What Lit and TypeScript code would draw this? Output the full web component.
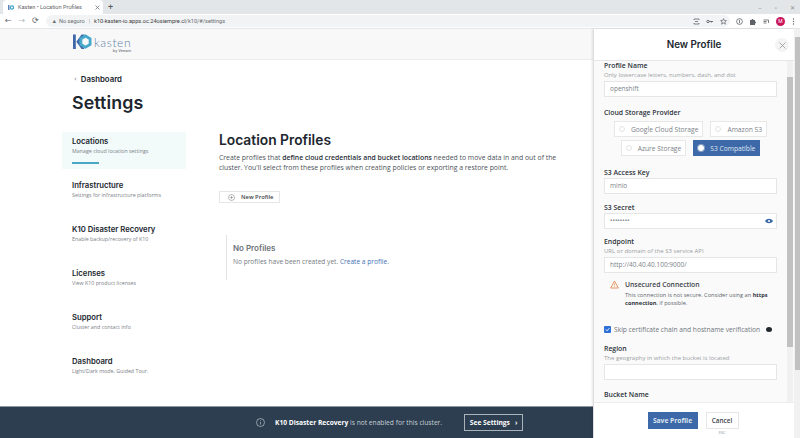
import { LitElement, html, css } from 'lit';
import { customElement } from 'lit/decorators.js';

const navItems = [
  { title: 'Locations', sub: 'Manage cloud location settings', active: true },
  { title: 'Infrastructure', sub: 'Settings for infrastructure platforms' },
  { title: 'K10 Disaster Recovery', sub: 'Enable backup/recovery of K10' },
  { title: 'Licenses', sub: 'View K10 product licenses' },
  { title: 'Support', sub: 'Cluster and contact info' },
  { title: 'Dashboard', sub: 'Light/Dark mode, Guided Tour.' },
];

const logoMark = html`<svg width="19" height="16" viewBox="0 0 19 16">
  <rect x="0" y="0.5" width="2.8" height="14.5" fill="#3f68a8"></rect>
  <path d="M3.300 7.700L8.600 .5h3L6.500 7.700l5.100 7.300h-3z" fill="#3f68a8"></path>
  <path d="M12.500 2l4.600 2.800v5.600l-4.600 2.800-4.600-2.800V4.800z" fill="none" stroke="#46a9cc" stroke-width="2.800"></path>
</svg>`;

@customElement('app-root')
export class AppRoot extends LitElement {
  static styles = css`
    :host {
      display: flex;
      flex-direction: column;
      width: 800px;
      height: 438px;
      overflow: hidden;
      font-family: 'Open Sans', sans-serif;
      color: #20262e;
      background: #fff;
    }
    .tabstrip {
      height: 14px;
      background: #e3e6e9;
      display: flex;
      align-items: flex-end;
      flex: none;
    }
    .tab {
      width: 100px;
      height: 14px;
      margin-left: 3px;
      background: #fff;
      border-radius: 4px 4px 0 0;
      display: flex;
      align-items: center;
      font: 5.600px 'Roboto', sans-serif;
      color: #5f6368;
      box-sizing: border-box;
      padding: 0 3px 0 5px;
      gap: 4px;
    }
    .tab .name { flex: 1; }
    .tabstrip .plus { margin-left: 5px; font: 9px 'Roboto', sans-serif; color: #555; align-self: center; }
    .winctl { margin-left: auto; display: flex; gap: 13px; padding-right: 5px; font: 6px 'Roboto', sans-serif; color: #8a8d91; align-self: center; }
    .toolbar {
      height: 15px;
      flex: none;
      background: #fff;
      display: flex;
      align-items: center;
      border-bottom: 1px solid #e5e6e8;
      box-sizing: border-box;
      padding-left: 5px;
    }
    .navbtn { width: 13.500px; font: 8px 'DejaVu Sans', sans-serif; color: #5f6368; line-height: 1; }
    .navbtn.off { color: #b5b8bb; }
    .omni {
      height: 12px;
      background: #f1f3f4;
      flex: none;
      width: 684px;
      border-radius: 6px;
      display: flex;
      align-items: center;
      padding: 0 0 0 6px;
      box-sizing: border-box;
      font: 5.600px 'Roboto', sans-serif;
      color: #6a6e72;
      gap: 2px;
    }
    .omni .sep { color: #aaa; margin: 0 2px; }
    .omni b { font-weight: 400; color: #3c4043; }
    .omni .tools { margin-left: auto; display: flex; gap: 6.500px; padding-right: 3px; align-items: center; }
    .extra { display: flex; align-items: center; gap: 6.500px; padding-left: 6px; }
    .avatar { width: 9px; height: 9px; border-radius: 50%; background: #c9145a; color: #fff; font: 5px/9px 'Roboto', sans-serif; text-align: center; }
    .page { position: relative; flex: 1; min-height: 0; display: flex; flex-direction: column; }
    .brand {
      height: 31px;
      flex: none;
      background: #f8f8f8;
      border-bottom: 1px solid #ececec;
      box-sizing: border-box;
      padding: 5px 0 0 73px;
      display: flex;
      align-items: flex-start;
      gap: 1px;
    }
    .wordmark { display: flex; flex-direction: column; color: #5c7fa8; font: 300 12px/13px 'Lato', sans-serif; letter-spacing: 0.6px; margin-top: 2px; margin-left: 1px; }
    .wordmark small { font: 4.200px/4px 'Roboto', sans-serif; letter-spacing: 0; color: #5b6670; text-align: right; }
    .content { flex: 1; min-height: 0; padding: 14px 0 0 62px; background: #fff; }
    .crumb { display: flex; align-items: center; gap: 4px; padding-left: 12px; font: 600 7.800px/10px 'Inter', sans-serif; }
    .crumb i { font: normal 7px/9px 'DejaVu Sans', sans-serif; color: #777; }
    h1 { margin: 8px 0 18px 10px; font: 600 17.800px/22px 'Inter', sans-serif; letter-spacing: 0.1px; }
    .columns { display: flex; }
    .nav { width: 124px; flex: none; display: flex; flex-direction: column; }
    .nav-item { height: 37px; padding: 4px 0 0 10px; box-sizing: border-box; margin-bottom: 7px; }
    .nav-item.active { background: #f2fafa; }
    .nav-item strong { display: block; font: 600 7.700px/11px 'Inter', sans-serif; }
    .nav-item span { display: block; font: 400 5.300px/9px 'Open Sans', sans-serif; color: #7b8187; }
    .nav-item u { display: block; width: 27px; height: 2px; margin-top: 6px; background: #4ba6c4; }
    .main { margin-left: 33px; width: 340px; }
    h2 { margin: 0 0 4px; font: 600 13.800px/17px 'Inter', sans-serif; }
    .main p { margin: 0; font: 400 6.850px/9.500px 'Open Sans', sans-serif; color: #4d535a; }
    .main p b { font-weight: 600; color: #2a3038; }
    .new {
      margin-top: 19px;
      width: 61px;
      height: 12px;
      border: 1px solid #e6e6e6;
      box-sizing: border-box;
      display: flex;
      align-items: center;
      gap: 6px;
      padding-left: 8px;
      font: 600 5.800px 'Open Sans', sans-serif;
      color: #3c424a;
    }
    .empty { margin: 32px 0 0 7px; border-left: 1px solid #e3e3e3; height: 45px; padding: 8px 0 0 6px; box-sizing: border-box; }
    .empty strong { display: block; font: 600 8px/11px 'Inter', sans-serif; color: #6d737a; }
    .empty span { display: block; margin-top: 3px; font: 400 6.600px/9px 'Open Sans', sans-serif; color: #767c82; }
    .empty a { color: #3f6fb5; }
    .banner {
      height: 32px;
      flex: none;
      background: #2c3e50;
      border-top: 1px solid #8b96a1;
      box-sizing: border-box;
      display: flex;
      align-items: center;
      padding-left: 256px;
      font: 400 6.660px 'Open Sans', sans-serif;
      color: #c8ced4;
    }
    .banner svg { margin-right: 10px; }
    .banner b { font-weight: 700; color: #fff; }
    .banner .cta {
      margin-left: 22px;
      width: 59px;
      height: 17px;
      border: 1px solid #aab2ba;
      box-sizing: border-box;
      display: flex;
      align-items: center;
      justify-content: center;
      gap: 5px;
      font-weight: 700;
      color: #fff;
    }
    .drawer {
      position: absolute;
      top: 0;
      bottom: 0;
      right: 6px;
      width: 201px;
      background: #fafafa;
      border-left: 1px solid #e0e0e0;
      display: flex;
      flex-direction: column;
      box-shadow: -1px 0 2px rgba(0, 0, 0, 0.1);
      box-sizing: border-box;
    }
    .pagebar { position: absolute; top: 0; bottom: 0; right: 0; width: 6px; background: #f1f1f1; }
    .pagebar div { margin: 8px 0 0 1px; height: 333px; background: #c1c1c1; }
    .d-head { height: 32px; flex: none; background: #fff; border-bottom: 1px solid #e6e6e6; display: flex; align-items: center; justify-content: center; position: relative; font: 600 9.800px 'Inter', sans-serif; box-sizing: border-box; }
    .close { position: absolute; right: 5px; top: 9px; width: 14px; height: 14px; border-radius: 50%; background: #f4f4f4; display: flex; align-items: center; justify-content: center; }
    .d-body { flex: 1; min-height: 0; overflow: hidden; padding: 0 16px 0 10px; position: relative; }
    .d-scroll { position: absolute; top: 0; bottom: 0; right: 1px; width: 6px; background: #f1f1f1; }
    .d-scroll div { margin-top: 16px; height: 270px; background: #c1c1c1; }
    label { display: block; font: 600 6.900px/9px 'Open Sans', sans-serif; color: #2d333a; }
    .hint { margin-top: 1px; font: 400 6px/8px 'Open Sans', sans-serif; color: #9a9fa4; }
    .input { height: 16px; width: 173px; border: 1px solid #e6e6e6; background: #fff; box-sizing: border-box; padding-left: 5px; font: 400 6.500px/14px 'Open Sans', sans-serif; color: #7c8288; position: relative; }
    .hint + .input { margin-top: 2px; }
    label + .input { margin-top: 1.500px; }
    .sp-cloud { margin-top: 10.500px; }
    .sp-access { margin-top: 11.500px; }
    .sp-secret { margin-top: 8.500px; }
    .sp-end { margin-top: 7.500px; }
    .sp-region { margin-top: 9.500px; }
    .sp-bucket { margin-top: 9.500px; }
    .providers { display: flex; flex-direction: column; align-items: center; gap: 3px; margin-top: 4.500px; width: 173px; box-sizing: border-box; }
    .row { display: flex; gap: 7px; }
    .opt { height: 16px; border: 1px solid #e8e8e8; background: #fff; box-sizing: border-box; display: flex; align-items: center; gap: 6px; padding: 0 4px; font: 400 6.700px 'Open Sans', sans-serif; color: #7c8288; }
    .opt i { width: 6px; height: 6px; border-radius: 50%; border: 1px solid #e4e4e4; box-sizing: border-box; }
    .opt.on { background: #3e69a9; border-color: #3e69a9; color: #dfe7f2; }
    .opt.on i { background: #fff; border: 1px solid #fff; box-shadow: 0 0 0 1px #8aa3c9; }
    .eye { position: absolute; right: 3px; top: 4px; }
    .warn { display: flex; gap: 6px; padding: 7px 0 0 6px; height: 52px; box-sizing: border-box; }
    .warn strong { display: block; font: 600 6.800px/10px 'Open Sans', sans-serif; color: #3d434a; }
    .warn span { display: block; font: 400 5.650px/8px 'Open Sans', sans-serif; color: #60666c; margin-top: 1px; width: 150px; }
    .warn b { color: #2f353c; }
    .check { display: flex; align-items: center; gap: 3px; font: 400 6.650px/10px 'Open Sans', sans-serif; color: #71777d; margin: 0; white-space: nowrap; }
    .check i { width: 7px; height: 7px; background: #2f6fd6; border-radius: 1px; display: flex; align-items: center; justify-content: center; flex: none; }
    .check em { width: 6px; height: 5px; border-radius: 50%; background: #23282e; margin-left: 3px; flex: none; }
    .d-foot { height: 36px; flex: none; background: #fff; border-top: 1px solid #ececec; display: flex; justify-content: center; gap: 8px; padding: 9px 2px 0 0; box-sizing: border-box; }
    .save { width: 50px; height: 17px; background: #3e69a9; color: #dce5f1; font: 700 6.700px/17px 'Open Sans', sans-serif; text-align: center; }
    .cancel-wrap { display: flex; flex-direction: column; align-items: center; }
    .cancel { width: 33px; height: 17px; border: 1px solid #e6e6e6; box-sizing: border-box; font: 600 6.400px/15px 'Open Sans', sans-serif; text-align: center; color: #3c424a; }
    .cancel-wrap small { font: 400 3.800px/6px 'Open Sans', sans-serif; color: #8a8f94; margin-top: 1px; }
  `;

  render() {
    return html`
      <div class="tabstrip">
        <div class="tab">
          <svg width="6" height="5" viewBox="0 0 18 16">
            <rect x="0" y="0" width="4" height="16" fill="#3f68a8"></rect>
            <circle cx="12" cy="8" r="5" fill="none" stroke="#46a9cc" stroke-width="4"></circle>
          </svg>
          <span class="name">Kasten • Location Profiles</span>
          <svg width="5" height="5" viewBox="0 0 5 5" stroke="#5f6368" stroke-width="0.7"><path d="M.5.500l4 4M4.500.500l-4 4"></path></svg>
        </div>
        <div class="plus">+</div>
        <div class="winctl"><span>–</span><span>▫</span><span>✕</span></div>
      </div>
      <div class="toolbar">
        <div class="navbtn">←</div>
        <div class="navbtn off">→</div>
        <div class="navbtn">⟳</div>
        <div class="omni">
          <span>▲</span><span>No seguro</span><span class="sep">|</span>
          <span><b>k10-kasten-io.apps.oc.24osiempre.cl</b>/k10/#/settings</span>
          <div class="tools">
            <svg width="7" height="7" viewBox="0 0 7 7" fill="none" stroke="#5f6368" stroke-width="0.8"><path d="M1 2V1h5v1M1 5v1h5V5M2 3.500h3"></path></svg>
            <svg width="7" height="7" viewBox="0 0 7 7" fill="none" stroke="#5f6368" stroke-width="0.9"><circle cx="2" cy="3.500" r="1.200"></circle><path d="M3.200 3.500H7M5.500 3.500v1"></path></svg>
            <svg width="7" height="7" viewBox="0 0 7 7" fill="none" stroke="#5f6368" stroke-width="0.7"><path d="M3.500.6l.9 2h2l-1.600 1.400.6 2.200-1.900-1.200-1.900 1.200.6-2.200L.6 2.600h2z"></path></svg>
          </div>
        </div>
        <div class="extra">
          <svg width="7" height="7" viewBox="0 0 7 7" fill="none" stroke="#5f6368" stroke-width="0.8"><circle cx="3.500" cy="3.500" r="2.900"></circle><path d="M3.500 1.800v3.400"></path></svg>
          <svg width="7" height="7" viewBox="0 0 7 7" fill="#5f6368"><path d="M1 2h1.500a1 1 0 0 1 2 0H6v1.500a1 1 0 0 1 0 2V7H1z"></path></svg>
          <svg width="7" height="7" viewBox="0 0 7 7" fill="none" stroke="#5f6368" stroke-width="0.8"><path d="M.5 2h5M.5 3.500h3M.5 5h3M5.500 2v3"></path></svg>
          <div class="avatar">M</div>
          <svg width="3" height="7" viewBox="0 0 3 7" fill="#5f6368"><circle cx="1.500" cy="1" r=".7"></circle><circle cx="1.500" cy="3.500" r=".7"></circle><circle cx="1.500" cy="6" r=".7"></circle></svg>
        </div>
      </div>
      <div class="page">
        <div class="brand">
          ${logoMark}
          <div class="wordmark">kasten<small>by Veeam</small></div>
        </div>
        <div class="content">
          <div class="crumb"><i>‹</i>Dashboard</div>
          <h1>Settings</h1>
          <div class="columns">
            <div class="nav">
              ${navItems.map(
                (item) => html`
                  <div class="nav-item ${item.active ? 'active' : ''}">
                    <strong>${item.title}</strong>
                    <span>${item.sub}</span>
                    ${item.active ? html`<u></u>` : ''}
                  </div>
                `
              )}
            </div>
            <div class="main">
              <h2>Location Profiles</h2>
              <p>
                Create profiles that <b>define cloud credentials and bucket locations</b> needed to move data in and out of
                the cluster. You'll select from these profiles when creating policies or exporting a restore point.
              </p>
              <div class="new">
                <svg width="7" height="7" viewBox="0 0 7 7" fill="none" stroke="#777" stroke-width="0.5"><circle cx="3.500" cy="3.500" r="3"></circle><path d="M3.500 1.800v3.400M1.800 3.500h3.400"></path></svg>
                New Profile
              </div>
              <div class="empty">
                <strong>No Profiles</strong>
                <span>No profiles have been created yet. <a>Create a profile.</a></span>
              </div>
            </div>
          </div>
        </div>
        <div class="banner">
          <svg width="9" height="9" viewBox="0 0 9 9" fill="none" stroke="#d5dade" stroke-width="0.6"><circle cx="4.500" cy="4.500" r="4"></circle><path d="M4.500 4v2.500M4.500 2.300v.8"></path></svg>
          <span><b>K10 Disaster Recovery</b> is not enabled for this cluster.</span>
          <div class="cta">See Settings <span>›</span></div>
        </div>
        <div class="drawer">
          <div class="d-head">
            New Profile
            <div class="close">
              <svg width="7" height="7" viewBox="0 0 7 7" stroke="#777" stroke-width="0.6"><path d="M.5.500l6 6M6.500.500l-6 6"></path></svg>
            </div>
          </div>
          <div class="d-body">
            <label>Profile Name</label>
            <div class="hint">Only lowercase letters, numbers, dash, and dot</div>
            <div class="input">openshift</div>
            <label class="sp-cloud">Cloud Storage Provider</label>
            <div class="providers">
              <div class="row">
                <div class="opt"><i></i>Google Cloud Storage</div>
                <div class="opt"><i></i>Amazon S3</div>
              </div>
              <div class="row">
                <div class="opt"><i></i>Azure Storage</div>
                <div class="opt on"><i></i>S3 Compatible</div>
              </div>
            </div>
            <label class="sp-access">S3 Access Key</label>
            <div class="input">minio</div>
            <label class="sp-secret">S3 Secret</label>
            <div class="input">
              ••••••••
              <svg class="eye" width="8" height="6" viewBox="0 0 8 6"><path d="M0 3c2-3 6-3 8 0-2 3-6 3-8 0z" fill="#3e69a9"></path><circle cx="4" cy="3" r="1" fill="#fff"></circle></svg>
            </div>
            <label class="sp-end">Endpoint</label>
            <div class="hint">URL or domain of the S3 service API</div>
            <div class="input">http://40.40.40.100:9000/</div>
            <div class="warn">
              <svg width="9" height="9" viewBox="0 0 9 9" fill="none" stroke="#e58a4e" stroke-width="0.9"><path d="M4.500 1L8.300 8H.7z"></path><path d="M4.500 3.500v2.200M4.500 6.300v.8" stroke-width="0.7"></path></svg>
              <div>
                <strong>Unsecured Connection</strong>
                <span>This connection is not secure. Consider using an <b>https connection</b>, if possible.</span>
              </div>
            </div>
            <div class="check">
              <i><svg width="5" height="5" viewBox="0 0 5 5" fill="none" stroke="#fff" stroke-width="0.9"><path d="M.8 2.500l1.300 1.300L4.300 1.200"></path></svg></i>
              Skip certificate chain and hostname verification
              <em></em>
            </div>
            <label class="sp-region">Region</label>
            <div class="hint">The geography in which the bucket is located</div>
            <div class="input"></div>
            <label class="sp-bucket">Bucket Name</label>
            <div class="d-scroll"><div></div></div>
          </div>
          <div class="d-foot">
            <div class="save">Save Profile</div>
            <div class="cancel-wrap">
              <div class="cancel">Cancel</div>
              <small>ESC</small>
            </div>
          </div>
        </div>
        <div class="pagebar"><div></div></div>
      </div>
    `;
  }
}
